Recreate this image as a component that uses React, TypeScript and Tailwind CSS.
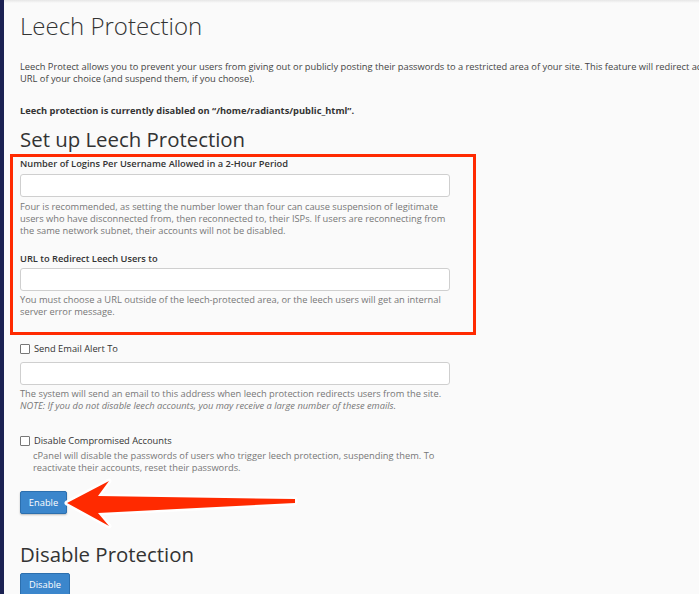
import React from "react";

const font = { fontFamily: '"Open Sans", "Noto Sans", sans-serif' };

function Input() {
  return <div className="w-[430px] h-[23px] bg-white border border-[#cfcfcf] rounded-[3px]" />;
}

function Checkbox() {
  return <span className="inline-block w-[10px] h-[10px] border border-[#777] rounded-[1px] bg-white mr-[4px]" />;
}

export default function App() {
  return (
    <div className="w-[699px] h-[594px] overflow-hidden flex bg-[#fafafa] relative" style={font}>
      <div className="w-[4px] shrink-0 bg-[#1b2152]" />
      <div className="flex-1 relative">
        <div className="absolute top-0 left-0 right-0 h-[3px] bg-gradient-to-b from-[#e6e6e6] to-[#fafafa]" />
        <div className="pl-[16px] pt-[10px] text-[#333] text-[9.3px] leading-[12px]">
          <h1 className="text-[24px] leading-[32px] font-light text-[#333] whitespace-nowrap">Leech Protection</h1>
          <p className="mt-[19px] whitespace-nowrap text-[#444]">
            Leech Protect allows you to prevent your users from giving out or publicly posting their passwords to a restricted area of your site. This feature will redirect accounts that have been compromised to a
            <br />
            URL of your choice (and suspend them, if you choose).
          </p>
          <p className="mt-[20px] font-bold whitespace-nowrap">Leech protection is currently disabled on “/home/radiants/public_html”.</p>
          <h2 className="mt-[9px] text-[20.4px] leading-[26px] text-[#333] whitespace-nowrap">Set up Leech Protection</h2>

          <div className="-ml-[10px] w-[466px] border-[3px] border-[#ff2a00] pl-[7px] pt-[1px] pb-[14px] mt-[2px]">
            <div className="font-semibold">Number of Logins Per Username Allowed in a 2-Hour Period</div>
            <div className="mt-[4px]"><Input /></div>
            <div className="mt-[4px] text-[#777]">
              Four is recommended, as setting the number lower than four can cause suspension of legitimate
              <br />
              users who have disconnected from, then reconnected to, their ISPs. If users are reconnecting from
              <br />
              the same network subnet, their accounts will not be disabled.
            </div>
            <div className="mt-[16px] font-semibold">URL to Redirect Leech Users to</div>
            <div className="mt-[3px]"><Input /></div>
            <div className="mt-[3px] text-[#777]">
              You must choose a URL outside of the leech-protected area, or the leech users will get an internal
              <br />
              server error message.
            </div>
          </div>

          <div className="mt-[8px] flex items-center">
            <Checkbox />
            <span>Send Email Alert To</span>
          </div>
          <div className="mt-[7px]"><Input /></div>
          <div className="mt-[3px] text-[#777]">
            The system will send an email to this address when leech protection redirects users from the site.
            <br />
            <i>NOTE: If you do not disable leech accounts, you may receive a large number of these emails.</i>
          </div>

          <div className="mt-[23px] flex items-center">
            <Checkbox />
            <span>Disable Compromised Accounts</span>
          </div>
          <div className="pl-[13px] mt-[3px] text-[#777]">
            cPanel will disable the passwords of users who trigger leech protection, suspending them. To
            <br />
            reactivate their accounts, reset their passwords.
          </div>

          <button className="block mt-[17px] w-[47px] h-[23px] bg-[#3b86cc] border border-[#2c6fae] rounded-[2px] text-white text-[9.3px] shadow-[0_1px_2px_rgba(0,0,0,0.25)]">Enable</button>

          <h2 className="mt-[27px] text-[20.4px] leading-[26px] text-[#333] whitespace-nowrap">Disable Protection</h2>
          <button className="block mt-[6px] w-[50px] h-[23px] bg-[#3b86cc] border border-[#2c6fae] rounded-[2px] text-white text-[9.3px]">Disable</button>
        </div>
      </div>
      <svg className="absolute left-0 top-0 pointer-events-none" width="699" height="594">
        <polygon
          points="67,503 109,481 98,496 295,499 295,503 98,513 109,526"
          fill="#ff2a00"
          stroke="#ffffff"
          strokeWidth="5"
          strokeLinejoin="round"
          paintOrder="stroke"
        />
      </svg>
    </div>
  );
}
